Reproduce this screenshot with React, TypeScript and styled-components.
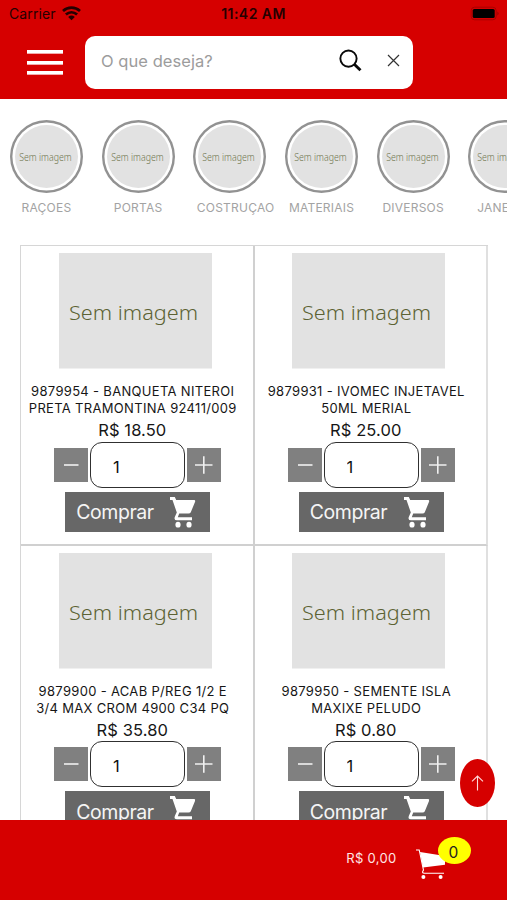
import React from "react";
import styled, { createGlobalStyle } from "styled-components";

const RED = "#d60000";

const GlobalStyle = createGlobalStyle`
  * { box-sizing: border-box; }
  body { margin: 0; background: #fff; overflow: hidden; font-family: Inter, "Liberation Sans", sans-serif; }
  button, input { font: inherit; border: 0; padding: 0; margin: 0; background: none; }
  svg { display: block; flex: none; overflow: visible; }
`;

const Screen = styled.div`
  position: relative;
  width: 507px;
  height: 900px;
  display: flex;
  flex-direction: column;
  overflow: hidden;
  background: #fff;
`;

const Header = styled.header`
  flex: none;
  height: 99px;
  background: ${RED};
`;

const StatusBar = styled.div`
  height: 28px;
  padding: 0 7px 0 9px;
  display: grid;
  grid-template-columns: 1fr auto 1fr;
  align-items: center;
  color: #250000;
  font-size: 14px;
  line-height: 28px;
`;

const Carrier = styled.div`
  display: flex;
  align-items: center;
  gap: 6px;
  letter-spacing: 0.1px;
`;

const Clock = styled.div`
  font-weight: 600;
  font-size: 14px;
  letter-spacing: 0.45px;
  margin-right: 2px;
`;

const BatterySlot = styled.div`
  display: flex;
  justify-content: flex-end;
`;

const SearchRow = styled.div`
  display: flex;
  align-items: center;
  height: 53px;
  margin-top: 8px;
  padding-left: 27px;
`;

const MenuButton = styled.button`
  width: 36px;
  height: 25px;
  margin-right: 22px;
  display: flex;
  flex-direction: column;
  justify-content: space-between;
`;

const MenuLine = styled.span`
  width: 36px;
  height: 4px;
  background: #fff;
  border: solid #f3a9a9;
  border-width: 0 0 0.5px;
`;

const SearchBox = styled.div`
  width: 328px;
  height: 53px;
  border-radius: 10px;
  background: #fff;
  display: flex;
  align-items: center;
  padding: 0 13px 0 16px;
`;

const SearchInput = styled.input`
  flex: 1;
  min-width: 0;
  height: 30px;
  font-size: 16.5px;
  letter-spacing: 0.05px;
  margin-top: -3px;
  color: #333;
  outline: none;
  &::placeholder { color: #9c9c9c; opacity: 1; }
`;

const Categories = styled.nav`
  flex: none;
  display: flex;
  height: 146px;
  padding: 21px 0 0 0.6px;
  overflow: hidden;
`;

const Category = styled.div`
  flex: 0 0 91.7px;
  display: flex;
  flex-direction: column;
  align-items: center;
`;

const Ring = styled.div`
  width: 73px;
  height: 73px;
  display: grid;
  place-items: center;
  border-radius: 50%;
  box-shadow: inset 0 0 0 2.4px #929292;
`;

const CategoryName = styled.div`
  width: 66px;
  margin-top: 7px;
  text-align: center;
  white-space: nowrap;
  font-size: 12px;
  line-height: 16px;
  letter-spacing: 0.22px;
  color: #a3a3a3;
`;

const Catalog = styled.main`
  flex: 1;
  min-height: 0;
  overflow: hidden;
  padding-left: 20px;
`;

const ProductGrid = styled.div`
  display: grid;
  grid-template-columns: 233.5px 233.5px;
  grid-auto-rows: 299.5px;
  width: 468px;
  border: solid #d6d6d6;
  border-width: 1px 0 0 1px;
`;

const Card = styled.article`
  border: solid #d0d0d0;
  border-width: 0 2px 2px 0;
  padding: 7px 3px 0 0;
  display: flex;
  flex-direction: column;
  align-items: center;
  &:nth-child(even) { border-right-color: #e0e0e0; }
`;

const Title = styled.h2`
  margin: 14px 0 0 -5px;
  height: 34px;
  font-size: 13px;
  line-height: 17px;
  font-weight: 400;
  letter-spacing: 0.32px;
  text-align: center;
  color: #161616;
  white-space: pre-line;
`;

const Price = styled.div`
  margin: 3px 0 0 -6px;
  font-size: 16.5px;
  line-height: 20px;
  letter-spacing: 0.1px;
  color: #161616;
`;

const Quantity = styled.div`
  display: flex;
  align-items: center;
  margin: 1.5px 0 0 4.5px;
  gap: 2px;
`;

const Step = styled.button`
  width: 34px;
  height: 34px;
  background: #808080;
`;

const Amount = styled.input`
  width: 95px;
  height: 46px;
  border: 1.3px solid #303030;
  border-radius: 12px;
  padding: 4px 0 0 22px;
  font-size: 16.5px;
  color: #111;
  background: #fff;
`;

const BuyButton = styled.button`
  width: 145px;
  height: 40px;
  margin: 4px 0 0 5px;
  padding: 0 14px 0 11px;
  display: flex;
  align-items: center;
  justify-content: space-between;
  background: #676767;
  color: #f5f5f5;
  font-size: 19.5px;
  letter-spacing: -0.45px;
`;

const BuyText = styled.span`
  padding-top: 1.5px;
`;

const Footer = styled.footer`
  flex: none;
  height: 80px;
  background: ${RED};
  display: flex;
  justify-content: flex-end;
  padding: 28px 60px 0 0;
`;

const Total = styled.div`
  font-size: 13px;
  line-height: 21px;
  letter-spacing: 0.3px;
  color: #ffe6e6;
  margin-right: 18.5px;
`;

const CartHolder = styled.div`
  position: relative;
  width: 32px;
  height: 32px;
`;

const Badge = styled.span`
  position: absolute;
  left: 23px;
  top: -11px;
  width: 33px;
  height: 27px;
  border-radius: 50%;
  background: #ffff00;
  display: flex;
  align-items: center;
  justify-content: center;
  padding: 4px 2px 0 0;
  font-size: 15.5px;
  color: #222;
`;

const TopButton = styled.button`
  position: absolute;
  right: 12px;
  bottom: 93px;
  width: 35px;
  height: 48px;
  border-radius: 50%;
  background: ${RED};
  display: grid;
  place-items: center;
`;

const WifiIcon = () => (
  <svg width="19" height="15" viewBox="0 0 19 15" fill="none" stroke="#250000" strokeWidth="2.7">
    <path d="M1 3.9C5.8 -.6 13.2 -.6 18 3.9" />
    <path d="M3.9 7.6C7.2 4.5 11.8 4.5 15.1 7.6" />
    <path d="M6.2 10Q9.5 7.2 12.8 10L9.5 13.2Z" fill="#250000" stroke="none" />
  </svg>
);

const BatteryIcon = () => (
  <svg width="29" height="14" viewBox="0 0 29 14">
    <rect x=".2" y=".2" width="25" height="12.6" rx="3.4" fill="none" stroke="#a80000" />
    <rect x="1.7" y="1.9" width="22" height="9.2" rx="1.6" fill="#000" />
    <path d="M26.5 4.5Q28.5 6.5 26.5 8.5Z" fill="#8b0000" />
  </svg>
);

const SearchIcon = () => (
  <svg width="23" height="23" viewBox="0 0 24 24" fill="none" stroke="#090909">
    <circle cx="9.9" cy="10" r="8.5" strokeWidth="2" />
    <path d="M15.7 15.6L22.4 22.2" strokeWidth="3" />
  </svg>
);

const CloseIcon = () => (
  <svg width="13" height="13" viewBox="0 0 13 13" stroke="#333" strokeWidth="1.2">
    <path d="M1 1L12 12M12 1L1 12" />
  </svg>
);

const SearchTools = styled.div`
  display: flex;
  align-items: center;
  gap: 25px;
  margin-top: -4px;
`;

const NoPhoto = () => (
  <svg width="153" height="116" viewBox="0 0 153 116">
    <rect width="153" height="115.5" fill="#e2e2e2" />
    <text x="10" y="67.3" fontFamily='"Noto Sans", sans-serif' fontSize="19.2" fontWeight="300" fill="#5c6233" textLength="129" lengthAdjust="spacingAndGlyphs">Sem imagem</text>
  </svg>
);

const NoPhotoRound = () => (
  <svg width="63" height="63" viewBox="0 0 63 63">
    <circle cx="31.5" cy="31.5" r="31.5" fill="#e2e2e2" />
    <text x="4.2" y="36.2" fontFamily='"Noto Sans", sans-serif' fontSize="11" fontWeight="300" fill="#70764f" textLength="52.5" lengthAdjust="spacingAndGlyphs">Sem imagem</text>
  </svg>
);

const MinusIcon = () => (
  <svg width="34" height="34" viewBox="0 0 34 34" stroke="#f0f0f0" strokeWidth="1.6">
    <path d="M10 17H24.5" />
  </svg>
);

const PlusIcon = () => (
  <svg width="34" height="34" viewBox="0 0 34 34" stroke="#f0f0f0" strokeWidth="1.6">
    <path d="M8 17H25.5M16.8 8.3V25.8" />
  </svg>
);

const BuyCartIcon = () => (
  <svg width="26" height="32" viewBox="0 0 26 32" fill="#fff">
    <path d="M0 1H4.8L6.2 4H24.2Q25.7 4 25 6L20.8 16.2Q20.2 17.6 18.5 17.6H9.2L7.8 21.2H22V24.3H7Q3.7 24.3 4.8 21L6.8 16.5L2.5 4H0Z" />
    <ellipse cx="8" cy="28.7" rx="2.6" ry="2.9" />
    <ellipse cx="19" cy="28.7" rx="2.6" ry="2.9" />
  </svg>
);

const FooterCartIcon = () => (
  <svg width="32" height="32" viewBox="0 0 32 32" fill="#fff">
    <path d="M5 4L30 8V16.8L8 19.5Z" />
    <path d="M1 2H4.2L8.5 22.2Q6.2 25.3 9.5 25.3H29" fill="none" stroke="#fff" strokeWidth="1.1" />
    <circle cx="8.4" cy="29" r="2" />
    <circle cx="25.6" cy="29" r="2" />
  </svg>
);

const ArrowIcon = () => (
  <svg width="13" height="16" viewBox="0 0 13 16" fill="none" stroke="#ffd9d9" strokeWidth="1.1">
    <path d="M6.5 15.5V1M1 6.3L6.5 1L12 6.3" />
  </svg>
);

const categories = ["RAÇOES", "PORTAS", "COSTRUÇAO", "MATERIAIS", "DIVERSOS", "JANELAS"];

const products = [
  { title: "9879954 - BANQUETA NITEROI\nPRETA TRAMONTINA 92411/009", price: "R$ 18.50" },
  { title: "9879931 - IVOMEC INJETAVEL\n50ML MERIAL", price: "R$ 25.00" },
  { title: "9879900 - ACAB P/REG 1/2 E\n3/4 MAX CROM 4900 C34 PQ", price: "R$ 35.80" },
  { title: "9879950 - SEMENTE ISLA\nMAXIXE PELUDO", price: "R$ 0.80" },
];

export default function App() {
  return (
    <>
      <GlobalStyle />
      <Screen>
        <Header>
          <StatusBar>
            <Carrier>Carrier <WifiIcon /></Carrier>
            <Clock>11:42 AM</Clock>
            <BatterySlot><BatteryIcon /></BatterySlot>
          </StatusBar>
          <SearchRow>
            <MenuButton aria-label="Menu"><MenuLine /><MenuLine /><MenuLine /></MenuButton>
            <SearchBox>
              <SearchInput placeholder="O que deseja?" />
              <SearchTools><SearchIcon /><CloseIcon /></SearchTools>
            </SearchBox>
          </SearchRow>
        </Header>
        <Categories>
          {categories.map((name) => (
            <Category key={name}>
              <Ring><NoPhotoRound /></Ring>
              <CategoryName>{name}</CategoryName>
            </Category>
          ))}
        </Categories>
        <Catalog>
          <ProductGrid>
            {products.map((p) => (
              <Card key={p.title}>
                <NoPhoto />
                <Title>{p.title}</Title>
                <Price>{p.price}</Price>
                <Quantity>
                  <Step aria-label="Diminuir"><MinusIcon /></Step>
                  <Amount defaultValue="1" />
                  <Step aria-label="Aumentar"><PlusIcon /></Step>
                </Quantity>
                <BuyButton><BuyText>Comprar</BuyText><BuyCartIcon /></BuyButton>
              </Card>
            ))}
          </ProductGrid>
        </Catalog>
        <Footer>
          <Total>R$ 0,00</Total>
          <CartHolder><FooterCartIcon /><Badge>0</Badge></CartHolder>
        </Footer>
        <TopButton aria-label="Topo"><ArrowIcon /></TopButton>
      </Screen>
    </>
  );
}
